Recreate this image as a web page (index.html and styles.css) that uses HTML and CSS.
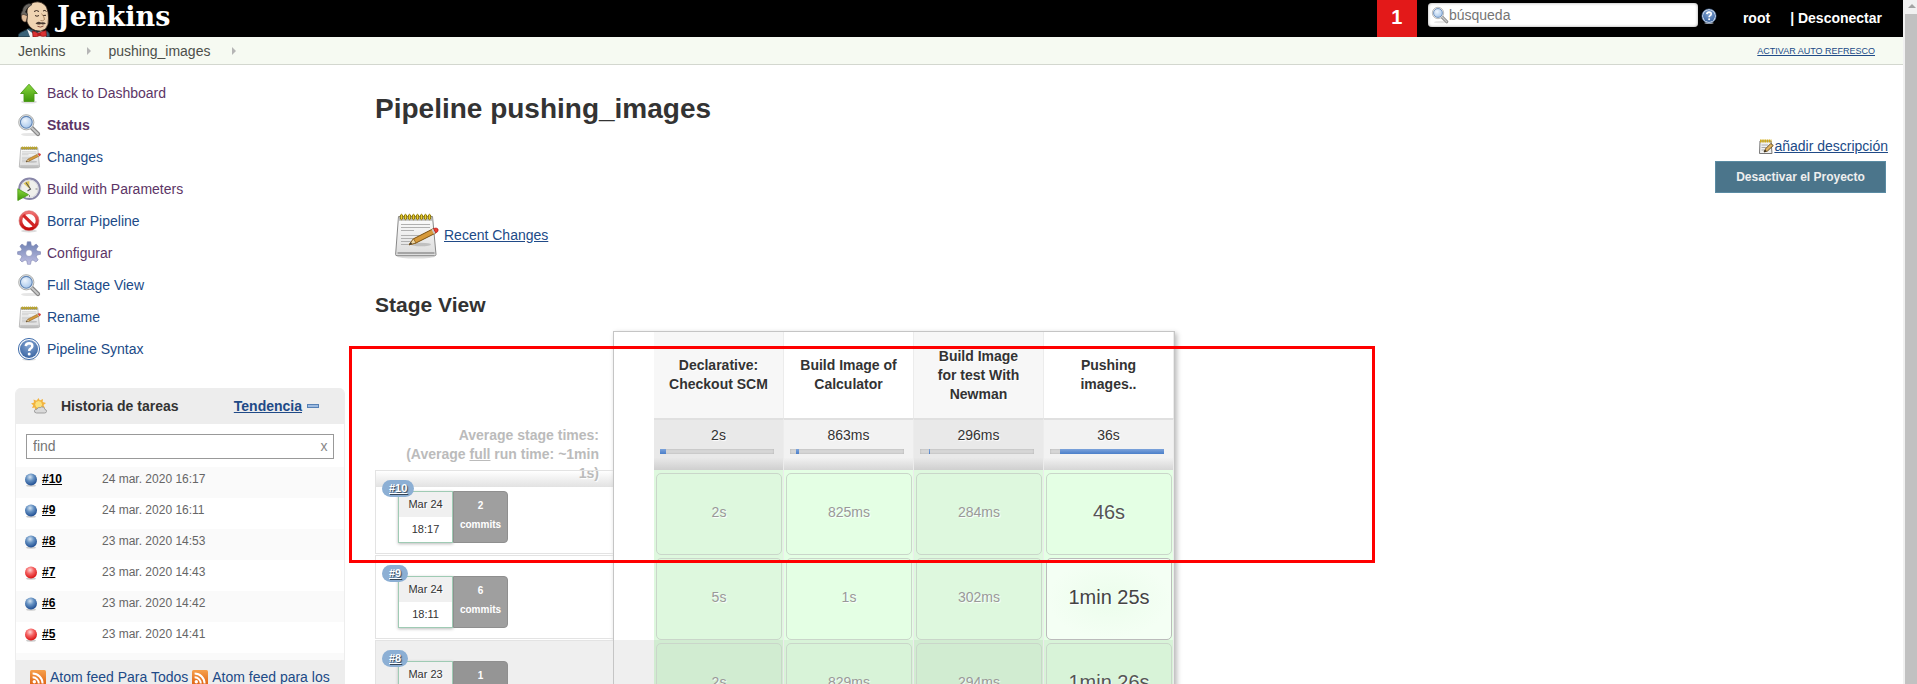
FILE: index.html
```html
<!DOCTYPE html>
<html lang="es">
<head>
<meta charset="utf-8">
<title>pushing_images [Jenkins]</title>
<link rel="stylesheet" href="styles.css">
</head>
<body>
<svg class="defs" width="0" height="0" aria-hidden="true">
  <defs>
    <linearGradient id="g-green" x1="0" y1="0" x2="0" y2="1"><stop offset="0" stop-color="#8ada3e"/><stop offset="1" stop-color="#3f960a"/></linearGradient>
    <linearGradient id="g-paper" x1="0" y1="0" x2="0" y2="1"><stop offset="0" stop-color="#fdfdfd"/><stop offset="1" stop-color="#dcdcdc"/></linearGradient>
    <linearGradient id="g-gear" x1="0" y1="0" x2="0" y2="1"><stop offset="0" stop-color="#6d80b2"/><stop offset="1" stop-color="#c0bfe2"/></linearGradient>
    <linearGradient id="g-red" x1="0" y1="0" x2="0" y2="1"><stop offset="0" stop-color="#f07070"/><stop offset="1" stop-color="#c40a0a"/></linearGradient>
    <linearGradient id="g-orange" x1="0" y1="0" x2="0" y2="1"><stop offset="0" stop-color="#f6a04c"/><stop offset="1" stop-color="#dd6011"/></linearGradient>
    <radialGradient id="g-lens" cx=".4" cy=".35" r=".7"><stop offset="0" stop-color="#eef5fd"/><stop offset="1" stop-color="#a3c4ea"/></radialGradient>
    <radialGradient id="g-help" cx=".5" cy=".3" r=".7"><stop offset="0" stop-color="#85a6d3"/><stop offset="1" stop-color="#3b66a3"/></radialGradient>
    <radialGradient id="g-blueball" cx=".42" cy=".3" r=".7"><stop offset="0" stop-color="#d3e2f0"/><stop offset=".45" stop-color="#6591c2"/><stop offset="1" stop-color="#1f4d91"/></radialGradient>
    <radialGradient id="g-redball" cx=".42" cy=".3" r=".7"><stop offset="0" stop-color="#ffd6d6"/><stop offset=".45" stop-color="#f56363"/><stop offset="1" stop-color="#d81313"/></radialGradient>
    <symbol id="i-up" viewBox="0 0 24 24">
      <ellipse cx="12" cy="21" rx="8" ry="1.6" fill="#ddd"/>
      <path d="M12 3.2 20.3 12.5H17V20.5H7V12.5H3.6Z" fill="url(#g-green)" stroke="#4c9a17" stroke-width=".9"/>
    </symbol>
    <symbol id="i-search" viewBox="0 0 24 24">
      <ellipse cx="13" cy="21.5" rx="9" ry="1.6" fill="#e6e6e6"/>
      <path d="M14.5 14.5 21 21" stroke="#858585" stroke-width="4.2" stroke-linecap="round"/>
      <path d="M14.8 14.8 21 21" stroke="#c9c9c9" stroke-width="1.8" stroke-linecap="round"/>
      <circle cx="9.3" cy="9.3" r="7.6" fill="#ececec" stroke="#a2a4a2" stroke-width=".9"/>
      <circle cx="9.3" cy="9.3" r="5.9" fill="url(#g-lens)" stroke="#6186b6" stroke-width="1.1"/>
    </symbol>
    <symbol id="i-notepad" viewBox="0 0 48 48">
      <ellipse cx="25" cy="45.6" rx="19" ry="2" fill="#ddd"/>
      <path d="M7.5 5.5H41.5L45 43.5Q45 44.7 43.5 44.7H6Q4.5 44.7 4.6 43.5Z" fill="url(#g-paper)" stroke="#888" stroke-width="1"/>
      <path d="M7.8 6.2H41.3L41.6 9.8H7.5Z" fill="#b9b9b9"/>
      <path d="M6.5 42H43.5" stroke="#a5a5a5" stroke-width="1.8"/>
      <path d="M10 13.5H39M10 16.5H39M10 19.5H23M10 24.5H28M10 27.5H24M10 30.5H20M10 33.5H17" stroke="#b0b0b0" stroke-width="1"/>
      <g fill="#e8ce35" stroke="#8d7500" stroke-width="1"><ellipse cx="10.5" cy="6" rx="1.3" ry="2.7"/><ellipse cx="14.5" cy="6" rx="1.3" ry="2.7"/><ellipse cx="18.5" cy="6" rx="1.3" ry="2.7"/><ellipse cx="22.5" cy="6" rx="1.3" ry="2.7"/><ellipse cx="26.5" cy="6" rx="1.3" ry="2.7"/><ellipse cx="30.5" cy="6" rx="1.3" ry="2.7"/><ellipse cx="34.5" cy="6" rx="1.3" ry="2.7"/><ellipse cx="38.5" cy="6" rx="1.3" ry="2.7"/></g>
      <ellipse cx="30" cy="33.5" rx="10" ry="1.8" fill="#999" opacity=".5"/>
      <path d="M18 33.8 22.5 27.8 42.5 17.6 44.8 22 25 32Z" fill="#d79a3b" stroke="#7c5212" stroke-width="1"/>
      <path d="M18 33.8 22.5 27.8 25 32Z" fill="#edd6a4" stroke="#7c5212" stroke-width=".7"/>
      <path d="M18 33.8 20 31.2 21 32.9Z" fill="#333"/>
      <path d="M40.5 18.6 42.8 23 44.8 22 42.5 17.5Z" fill="#c9c9c9"/>
      <path d="M42.5 17.5Q45.5 16.2 47 18Q48 20.5 44.8 22Z" fill="#ef3d33" stroke="#a11" stroke-width=".6"/>
    </symbol>
    <symbol id="i-notesm" viewBox="0 0 16 16">
      <path d="M2 2H13L14 14.5H1.5Z" fill="#f1f1f1" stroke="#777" stroke-width="1"/>
      <path d="M2 2H13.5" stroke="#d3ac15" stroke-width="3.2" stroke-dasharray="1.6 .6"/>
      <path d="M3.5 6H10M3.5 8.5H8M3.5 11H6" stroke="#aaa"/>
      <path d="M6 13 7.5 9.8 12.8 4.5 15.3 6.5 9.5 12Z" fill="#e3b562" stroke="#5d4215" stroke-width=".9"/>
      <path d="M6 13 7 10.8 8.5 12.2Z" fill="#222"/>
    </symbol>
    <symbol id="i-clock" viewBox="0 0 24 24">
      <circle cx="12.5" cy="11.8" r="10.3" fill="#f0f0ec" stroke="#8886a8" stroke-width="2"/>
      <circle cx="12.5" cy="11.8" r="8.7" fill="none" stroke="#d0d0dc" stroke-width=".8"/>
      <path d="M12.5 11.8 6.5 6.5Q9 4 12.3 3.9Z" fill="#dfc65a"/>
      <path d="M9 5.500 13.5 12 10.5 14" fill="none" stroke="#555" stroke-width="1.1"/>
      <path d="M18.5 12h2M12.5 18v2" stroke="#888"/>
      <path d="M.8 11.8V23.5L11.5 17.7Z" fill="url(#g-green)" stroke="#4c9a17" stroke-width=".8"/>
    </symbol>
    <symbol id="i-no" viewBox="0 0 24 24">
      <ellipse cx="12" cy="22" rx="8" ry="1.4" fill="#ddd"/>
      <circle cx="12" cy="11.7" r="8.3" fill="#fff" stroke="url(#g-red)" stroke-width="3.2"/>
      <path d="M6.2 6.2 17.8 17.4" stroke="#d32626" stroke-width="3.2"/>
      <circle cx="12" cy="11.7" r="10" fill="none" stroke="#c95050" stroke-width=".5"/>
    </symbol>
    <symbol id="i-gear" viewBox="0 0 24 24">
      <path fill="url(#g-gear)" fill-rule="evenodd" stroke="#7c83b0" stroke-width=".6" d="M10.3 .8H13.7L14.3 4.4 16.2 5.2 19.2 3.1 21.2 5.2 19.2 8.2 20 10.1 23.5 10.7V13.3L20 14 19.2 15.9 21.2 18.9 18.9 21 16 19 14.2 19.8 13.5 23.3H10.5L9.8 19.8 8 19 5 21 2.9 18.9 4.9 15.9 4 14 .6 13.3V10.7L4 10.1 4.9 8.2 2.9 5.2 5 3.1 8 5.2 9.8 4.4ZM12 8.7A3.4 3.4 0 1 0 12 15.5A3.4 3.4 0 1 0 12 8.7Z"/>
    </symbol>
    <symbol id="i-help" viewBox="0 0 24 24">
      <ellipse cx="12" cy="22.5" rx="7" ry="1.2" fill="#ddd"/>
      <circle cx="12" cy="12" r="10.6" fill="#f3f6fa" stroke="#4571ae" stroke-width="1"/>
      <circle cx="12" cy="12" r="9" fill="url(#g-help)"/>
      <path d="M8.8 9.2Q9 6.3 12.2 6.3 15.4 6.4 15.3 9.1 15.2 10.9 13.3 11.8 12.2 12.4 12.2 14" fill="none" stroke="#fff" stroke-width="2.5"/>
      <circle cx="12.2" cy="17" r="1.5" fill="#fff"/>
    </symbol>
    <symbol id="i-weather" viewBox="0 0 16 16">
      <path d="M7.5 0 8.8 2.6 12 1 11.7 4 15 5 12.5 7 14 10 4 12 3.8 9.4 1 10 2.3 7.3 0 5.5 3 4.6 2.5 1.5 5.5 2.7Z" fill="#f3b33d"/>
      <circle cx="7.6" cy="6.5" r="3.9" fill="#fbe07a" stroke="#eba52e" stroke-width=".7"/>
      <path d="M5.5 15Q3 14.8 3.5 12.6 4 11 6 11.2 7 8.8 9.3 9.6 10.5 8.3 12.5 9.3 13.8 10 13.7 11.2 15.7 11.6 15.5 13.5 15.2 15 13.5 15Z" fill="#dadada" stroke="#8f8f8f" stroke-width=".8"/>
    </symbol>
    <symbol id="i-blue" viewBox="0 0 14 14"><ellipse cx="7" cy="12.6" rx="5" ry="1.2" fill="#ccc"/><circle cx="7" cy="6.5" r="6" fill="url(#g-blueball)"/></symbol>
    <symbol id="i-red" viewBox="0 0 14 14"><ellipse cx="7" cy="12.6" rx="5" ry="1.2" fill="#ccc"/><circle cx="7" cy="6.5" r="6" fill="url(#g-redball)"/></symbol>
    <symbol id="i-rss" viewBox="0 0 16 16">
      <rect width="16" height="16" rx="1.5" fill="url(#g-orange)"/>
      <circle cx="4.3" cy="11.8" r="1.7" fill="#fff"/>
      <path d="M2.6 7.3A6.2 6.2 0 0 1 8.8 13.5M2.6 3.5A10 10 0 0 1 12.6 13.5" fill="none" stroke="#fff" stroke-width="2"/>
    </symbol>
  </defs>
</svg>

<div class="window">
  <div class="page">
    <header class="top">
      <a class="brand" href="#">
        <svg class="butler" viewBox="0 0 34 36" aria-hidden="true">
          <path d="M0 36Q0 32 3.5 31L11 27.5 21 31 29 30Q32 32 31.5 36Z" fill="#3a6277" stroke="#1a2e38"/>
          <path d="M9 28 17 34 23 30 27 31 28 36H12Z" fill="#f3f3f3"/>
          <path d="M9 13Q8 4 16 1.2 24 -.5 28.5 6 30.5 11 30.5 17 31 24 27.5 28 23 31.5 17.5 29.5 11.5 27.5 9 21Z" fill="#efd4b2" stroke="#2c1f17" stroke-width=".8"/>
          <path d="M11 2.5Q5 4 4.5 9.5 2 12 3.5 17 4 20.5 6.5 21L8.5 19 9.5 13 7.5 11Q9 6 14 3.5Z" fill="#6c6862" stroke="#222" stroke-width=".7"/>
          <path d="M6 13.5Q3 13 3.5 17 4.5 21.5 8 21L9.5 15Z" fill="#e0bc99" stroke="#3a2a20" stroke-width=".6"/>
          <path d="M16 10.5Q18.5 8.5 21 10.5M25 10Q27 8.5 28.5 10.5M17 14.5Q19 16 21 14.5M25 14.5 28 14.3" fill="none" stroke="#3a2a20" stroke-width="1"/>
          <path d="M23.5 12.5Q26.5 16 26.5 18.5 25 20.5 22.5 19.5" fill="none" stroke="#a5805e" stroke-width=".9"/>
          <path d="M17.5 22.5Q20 19.7 23 21.5 26 20.7 28 22.5 25 24 23 23 20 24.3 17.5 22.5Z" fill="#4b3c33"/>
          <path d="M19.5 25.3Q22.5 27 25.5 25" fill="none" stroke="#7d3d30" stroke-width=".9"/>
          <path d="M14.500 30Q18 30.5 20.5 32.5 24 30 28 29.5L28.5 35Q24 36 21.5 34.5 18 36.5 15 36Z" fill="#dc3132" stroke="#7d1111" stroke-width=".7"/>
          <circle cx="21.2" cy="33.4" r="1.9" fill="#b51f20"/>
        </svg>
        <span class="wordmark">Jenkins</span>
      </a>
      <div class="top-right">
        <a class="alerts" href="#">1</a>
        <form class="search">
          <svg class="search-icon" aria-hidden="true"><use href="#i-search"/></svg>
          <input type="text" placeholder="búsqueda" aria-label="búsqueda">
        </form>
        <a class="help" href="#" aria-label="Ayuda"><svg aria-hidden="true"><use href="#i-help"/></svg></a>
        <a class="user" href="#">root</a>
        <span class="logout">| <a href="#">Desconectar</a></span>
      </div>
    </header>

    <nav class="crumbs">
      <a href="#">Jenkins</a><span class="arrow"></span>
      <a href="#">pushing_images</a><span class="arrow"></span>
      <a class="refresh" href="#">ACTIVAR AUTO REFRESCO</a>
    </nav>

    <div class="body">
      <aside class="side">
        <nav class="tasks">
          <a class="visited" href="#"><svg><use href="#i-up"/></svg>Back to Dashboard</a>
          <a class="visited current" href="#"><svg><use href="#i-search"/></svg>Status</a>
          <a href="#"><svg><use href="#i-notepad"/></svg>Changes</a>
          <a class="visited" href="#"><svg><use href="#i-clock"/></svg>Build with Parameters</a>
          <a href="#"><svg><use href="#i-no"/></svg>Borrar Pipeline</a>
          <a class="visited" href="#"><svg><use href="#i-gear"/></svg>Configurar</a>
          <a href="#"><svg><use href="#i-search"/></svg>Full Stage View</a>
          <a href="#"><svg><use href="#i-notepad"/></svg>Rename</a>
          <a href="#"><svg><use href="#i-help"/></svg>Pipeline Syntax</a>
        </nav>
        <section class="history">
          <header class="history-head">
            <svg aria-hidden="true"><use href="#i-weather"/></svg>
            <h2>Historia de tareas</h2>
            <a href="#">Tendencia</a>
            <button class="collapse" type="button" aria-label="Contraer"></button>
          </header>
          <div class="find">
            <input type="text" placeholder="find" aria-label="find">
            <button type="button" aria-label="Borrar">x</button>
          </div>
          <ul class="builds">
            <li><svg><use href="#i-blue"/></svg><a href="#">#10</a><span>24 mar. 2020 16:17</span></li>
            <li><svg><use href="#i-blue"/></svg><a href="#">#9</a><span>24 mar. 2020 16:11</span></li>
            <li><svg><use href="#i-blue"/></svg><a href="#">#8</a><span>23 mar. 2020 14:53</span></li>
            <li><svg><use href="#i-red"/></svg><a href="#">#7</a><span>23 mar. 2020 14:43</span></li>
            <li><svg><use href="#i-blue"/></svg><a href="#">#6</a><span>23 mar. 2020 14:42</span></li>
            <li><svg><use href="#i-red"/></svg><a href="#">#5</a><span>23 mar. 2020 14:41</span></li>
          </ul>
          <footer class="feeds">
            <a href="#"><svg><use href="#i-rss"/></svg>Atom feed Para Todos</a>
            <a href="#"><svg><use href="#i-rss"/></svg>Atom feed para los</a>
          </footer>
        </section>
      </aside>

      <main class="main">
        <h1>Pipeline pushing_images</h1>
        <div class="actions">
          <a class="describe" href="#"><svg aria-hidden="true"><use href="#i-notesm"/></svg><span>añadir descripción</span></a>
          <button class="disable" type="button">Desactivar el Proyecto</button>
        </div>
        <a class="recent" href="#"><svg aria-hidden="true"><use href="#i-notepad"/></svg><span>Recent Changes</span></a>
        <h2 class="stage-title">Stage View</h2>

        <div class="stage-view">
          <div class="runs">
            <div class="avg-label">Average stage times:<br>(Average <u>full</u> run time: ~1min 1s)</div>
            <div class="run"><a class="badge" href="#">#10</a><div class="date"><span>Mar 24</span><span>18:17</span></div><div class="commits"><span>2</span><span>commits</span></div></div>
            <div class="run"><a class="badge" href="#">#9</a><div class="date"><span>Mar 24</span><span>18:11</span></div><div class="commits"><span>6</span><span>commits</span></div></div>
            <div class="run dim"><a class="badge" href="#">#8</a><div class="date"><span>Mar 23</span></div><div class="commits"><span>1</span></div></div>
          </div>
          <table class="stages">
            <thead>
              <tr class="names"><td></td><th scope="col">Declarative: Checkout SCM</th><th scope="col">Build Image of Calculator</th><th scope="col">Build Image for test With Newman</th><th scope="col">Pushing images..</th></tr>
              <tr class="averages">
                <td></td>
                <td>2s<div class="bar"><i style="width:5%"></i></div></td>
                <td>863ms<div class="bar"><b style="width:5%"></b><i style="width:3%"></i></div></td>
                <td>296ms<div class="bar"><b style="width:8%"></b><i style="width:1%"></i></div></td>
                <td>36s<div class="bar"><b style="width:9%"></b><i style="width:91%"></i></div></td>
              </tr>
            </thead>
            <tbody>
              <tr><td></td><td><div class="cell">2s</div></td><td><div class="cell">825ms</div></td><td><div class="cell">284ms</div></td><td><div class="cell long">46s</div></td></tr>
              <tr><td></td><td><div class="cell">5s</div></td><td><div class="cell">1s</div></td><td><div class="cell">302ms</div></td><td><div class="cell long hot">1min 25s</div></td></tr>
              <tr class="dim"><td></td><td><div class="cell">2s</div></td><td><div class="cell">829ms</div></td><td><div class="cell">294ms</div></td><td><div class="cell long">1min 26s</div></td></tr>
            </tbody>
          </table>
          <div class="highlight"></div>
        </div>
      </main>
    </div>
  </div>
  <div class="scrollbar" aria-hidden="true"><div class="scroll-up"></div><div class="thumb"></div></div>
</div>
</body>
</html>
```
FILE: styles.css
```css
* { box-sizing: border-box; }
body {
  margin: 0;
  font: 14px/19px "Liberation Sans", Arial, sans-serif;
  color: #333;
  background: #fff;
}
a { color: #204a87; }
svg { flex: none; }
.defs { position: absolute; }
.window { display: flex; height: 100vh; overflow: hidden; }
.page { flex: 1; min-width: 0; }

/* header */
.top { display: flex; justify-content: space-between; height: 37px; background: #000; overflow: hidden; }
.brand { display: flex; padding-left: 18px; text-decoration: none; color: #fff; }
.butler { width: 34px; height: 36px; margin-top: 1px; }
.wordmark { margin-left: 5px; font: bold 27px/34px "DejaVu Serif", Georgia, serif; }
.top-right { display: flex; font-weight: bold; }
.top-right a { color: #fff; text-decoration: none; }
.top-right .alerts { width: 40px; margin-right: 11px; background: #e31919; text-align: center; font-size: 20px; line-height: 34px; }
.search { display: flex; align-items: center; align-self: flex-start; width: 270px; height: 24px; margin-top: 3px; padding-left: 3px; border-radius: 4px; background: #fff; box-shadow: inset 0 0 3px #999; }
.search-icon { width: 18px; height: 18px; }
.search input { flex: 1; min-width: 0; border: 0; padding: 0; background: none; font: 14px/19px "Liberation Sans", Arial, sans-serif; }
.search input::placeholder, .find input::placeholder { color: #757575; opacity: 1; }
.help { width: 16px; margin: 8px 0 0 3px; }
.help svg { display: block; width: 16px; height: 16px; }
.user { margin: 9px 0 0 26px; }
.logout { margin: 9px 21px 0 20px; color: #fff; }

/* breadcrumbs */
.crumbs { display: flex; align-items: center; height: 28px; padding: 1px 28px 0 18px; background: #f6faf2; border-bottom: 1px solid #d3d7cf; }
.crumbs a { color: #4d4f4a; text-decoration: none; }
.crumbs .arrow { margin: 0 17px 0 22px; border: 4px solid transparent; border-left-color: #b5b5b5; border-right: 0; }
.crumbs .refresh { margin-left: auto; font-size: 9px; color: #204a87; text-decoration: underline; }

/* side panel */
.body { display: flex; }
.side { flex: none; width: 345px; padding: 12px 0 0 15px; }
.tasks a { display: flex; align-items: center; gap: 6px; height: 32px; text-decoration: none; }
.tasks svg { width: 24px; height: 24px; margin-left: 2px; }
.tasks .visited { color: #5c3566; }
.tasks .current { font-weight: bold; }
.history { margin-top: 23px; border: 1px solid #ededed; border-top: 0; border-radius: 6px 6px 0 0; }
.history-head { display: flex; align-items: center; height: 36px; padding: 0 25px 0 15px; background: #ededed; border-radius: 5px 5px 0 0; font-weight: bold; }
.history-head svg { width: 16px; height: 16px; }
.history-head h2 { margin: 0 auto 0 14px; font-size: 14px; line-height: 19px; }
.collapse { width: 12px; height: 4px; margin-left: 5px; padding: 0; border: 1px solid #5781b5; background: #9dbbe0; }
.find { display: flex; margin: 10px 10px 8px; height: 25px; border: 1px solid #999; }
.find input { flex: 1; min-width: 0; padding: 0 6px; border: 0; font: 14px/19px "Liberation Sans", Arial, sans-serif; }
.find button { width: 18px; padding: 0; border: 0; background: none; font: 14px/19px "Liberation Sans", Arial, sans-serif; color: #888; }
.builds { margin: 0; padding: 0 0 7px; list-style: none; font-size: 12px; background: #fafafa; }
.builds li { display: flex; height: 31px; padding: 3px 0 0 8px; background: #fff; }
.builds li:nth-child(odd) { background: #fafafa; }
.builds svg { width: 14px; height: 14px; margin-top: 3px; }
.builds a { width: 60px; margin-left: 4px; color: #000; font-weight: bold; }
.builds span { color: #666; }
.feeds { height: 60px; padding: 8px 14px; background: #ededed; white-space: nowrap; }
.feeds a { text-decoration: none; }
.feeds svg { width: 16px; height: 16px; margin-right: 4px; vertical-align: -4px; }

/* main panel */
.main { flex: 1; min-width: 0; padding: 28px 15px 0 30px; }
h1 { margin: 0; font-size: 28px; line-height: 32px; }
.actions { display: flex; flex-direction: column; align-items: flex-end; margin-top: 12px; }
.describe { display: flex; align-items: center; height: 19px; }
.describe svg { width: 16px; height: 16px; }
.describe, .recent { text-decoration: none; }
.describe span, .recent span { text-decoration: underline; }
.disable { width: 171px; height: 32px; margin: 5px 2px 0 0; border: 1px solid #5a8ba3; background: #4b758b; color: #eee; font: bold 12px/19px "Liberation Sans", Arial, sans-serif; }
.recent { display: flex; width: max-content; align-items: center; gap: 5px; margin: 18px 0 0 16px; }
.recent svg { width: 48px; height: 48px; }
.stage-title { margin: 34px 0 14px; font-size: 21px; line-height: 24px; }

/* stage view */
.stage-view { position: relative; display: flex; text-shadow: 1px 1px 1px #fff; }
.runs { width: 238px; }
.avg-label { height: 156px; margin-bottom: -17px; padding: 95px 14px 0 24px; text-align: right; font-weight: bold; color: #bbb; background: linear-gradient(#fff 140px, #e2e2e2); }
.run { position: relative; display: flex; height: 84px; margin-bottom: 1px; padding: 20px 0 0 22px; border: 1px solid #e3e3e3; border-right: 0; }
.run.dim { background: #efefef; }
.badge { position: absolute; left: 6px; top: 9px; padding: 0 7px; border-radius: 9px; background: #8cafd4; color: #fff; font: bold 11px/17px "Liberation Sans", Arial, sans-serif; text-shadow: 1px 1px 1px #345; }
.date { width: 55px; height: 52px; border: 1px solid #9fcbb4; background: #fff; box-shadow: 0 1px 3px #bbb; font-size: 11px; line-height: 25px; text-align: center; }
.date span { display: block; }
.date span:first-child { background: #f0f0f0; }
.commits { width: 55px; height: 52px; padding-top: 4px; border: 1px solid #8f8f8f; border-radius: 0 4px 4px 0; background: #9f9f9f; color: #fff; font-size: 10px; font-weight: bold; text-align: center; text-shadow: none; }
.commits span { display: block; }
.dim .commits { background: #959595; }
.stages { flex: none; align-self: flex-start; width: 562px; table-layout: fixed; border: 1px solid #c5c5c5; border-spacing: 0; background: #fff; box-shadow: 2px 2px 5px #bbb; text-align: center; }
.stages th, .stages td { width: 130px; padding: 0; border-right: 1px solid #ececec; }
.stages tr > :first-child { width: 40px; border: 0; }
.names th { height: 86px; padding: 0 14px; }
.names th:nth-child(even) { background: #f7f7f7; }
.averages td { height: 52px; vertical-align: top; }
.averages td:not(:first-child) { padding-top: 6px; border-top: 2px solid #e0e0e0; background: linear-gradient(#f2f2f2 75%, #d6d6d6); }
.averages td:nth-child(even) { background: linear-gradient(#e9e9e9 75%, #cfcfcf); }
.bar { display: flex; height: 5px; margin: 4px 9px 0 6px; background: #d6d6d6; box-shadow: inset 0 0 2px #aaa; }
.bar i { background: linear-gradient(#7ca3db, #4b7fc9); }
.stages tbody td { height: 85px; padding: 3px 1px 0 2px; background: #e4ffe4; }
.stages tbody td:nth-child(even) { background: #def8de; }
.stages tbody td:first-child { background: #fff; }
.stages tbody .dim td { background: #d8f3d8; }
.stages tbody .dim td:nth-child(even) { background: #d1ecd1; }
.stages tbody .dim td:first-child { background: #efefef; }
.cell { height: 82px; border: 1px solid #cad6ca; border-radius: 5px; line-height: 77px; color: #999; }
.cell.long { font-size: 20px; color: #555; }
.cell.hot { border-color: #bbb; background: radial-gradient(#ecfdec, #f4fff4 70%); color: #444; }
.highlight { position: absolute; left: -26px; top: 15px; width: 1026px; height: 217px; border: 3px solid #f00; pointer-events: none; }

/* window scrollbar */
.scrollbar { flex: none; display: flex; flex-direction: column; width: 14px; padding: 4px 0 0 2px; background: #f1f1f1; }
.scroll-up { width: 0; margin: 0 0 6px 3px; border: 4px solid transparent; border-top: 0; border-bottom-color: #a3a3a3; }
.thumb { flex: 1; background: #c1c1c1; }
```
